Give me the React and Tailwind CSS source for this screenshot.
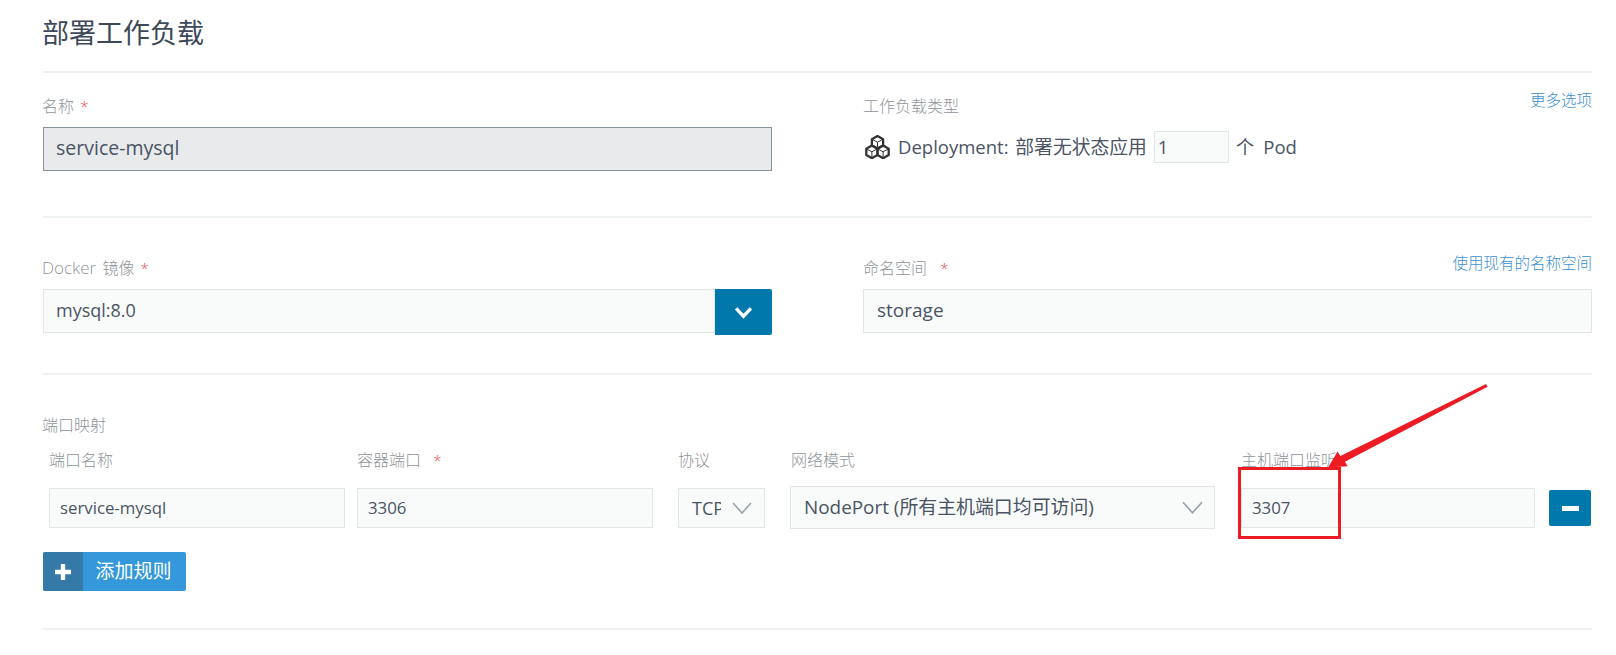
function Star({ className = "" }) {
  return <span className={`text-[#e8474a] text-[15px] leading-none ${className}`}>*</span>;
}

function Label({ children, className = "" }) {
  return <div className={`text-[16px] leading-5 text-[#8f959a] whitespace-nowrap ${className}`}>{children}</div>;
}

function Box({ children, className = "" }) {
  return (
    <div className={`flex items-center border border-[#e0e5e6] bg-[#f9fbfa] text-[#4a5464] whitespace-nowrap ${className}`}>
      {children}
    </div>
  );
}

function Chevron({ className = "" }) {
  return (
    <svg viewBox="0 0 20 12" className={`fill-none stroke-[#9aa3a8] ${className}`} strokeWidth="1.6">
      <path d="M1 1l9 10 9-10" />
    </svg>
  );
}

function CubesIcon() {
  const cube = (x, y) => (
    <g transform={`translate(${x} ${y})`}>
      <path d="M0-6.2L5.6-3V3.2L0 6.4-5.6 3.2V-3Z" />
      <path d="M-5.6-3L0 0 5.6-3M0 0V6.4" strokeWidth="1" />
    </g>
  );
  return (
    <svg viewBox="0 0 25 24" className="w-[25px] h-6 shrink-0 fill-none stroke-[#333333]" strokeWidth="2.3" strokeLinejoin="round">
      {cube(12.5, 7.2)}
      {cube(6.9, 16.8)}
      {cube(18.1, 16.8)}
    </svg>
  );
}

export default function App() {
  return (
    <div className="relative h-[655px] w-[1616px] overflow-hidden bg-white font-['Open_Sans','Noto_Sans_CJK_SC',sans-serif] font-light text-[#4a5464]">
      <div className="pl-[43px] pr-6">
        <div className="h-[73px] border-b-2 border-[#edf1f0] pt-[13px]">
          <h1 className="-ml-px text-[27px] leading-10 font-normal text-[#3d4859]">部署工作负载</h1>
        </div>

        <div className="grid h-[145px] grid-cols-[729px_729px] gap-x-[91px] border-b-2 border-[#edf1f0] pt-[23px]">
          <div>
            <Label className="-ml-px">名称 <Star className="ml-[2px]" /></Label>
            <div className="mt-[11px] flex h-[44px] items-center border border-[#8a939b] bg-[#e9eaec] pb-[3px] pl-[12px] text-[19.5px] font-normal text-[#4a5464]">
              service-mysql
            </div>
          </div>
          <div className="relative">
            <Label>工作负载类型</Label>
            <a className="absolute right-0 top-[-6px] text-[15.5px] leading-5 text-[#3b8fd0]">更多选项</a>
            <div className="mt-[15px] flex h-[32px] items-center text-[18.5px] font-normal">
              <span className="ml-[2px] mr-2"><CubesIcon /></span>
              <span className="whitespace-nowrap">Deployment: <span className="ml-[2px] text-[18.8px]">部署无状态应用</span></span>
              <Box className="ml-[7px] h-[32px] w-[75px] pl-[3px]">1</Box>
              <span className="ml-[7px] whitespace-nowrap">个<span className="ml-[9px]">Pod</span></span>
            </div>
          </div>
        </div>

        <div className="grid h-[157px] grid-cols-[729px_729px] gap-x-[91px] border-b-2 border-[#edf1f0] pt-[40px]">
          <div>
            <Label className="-ml-px"><span className="text-[17px]">Docker</span> <span className="ml-[2px]">镜像</span> <Star className="ml-[2px]" /></Label>
            <div className="mt-[11px] flex h-[46px] items-start">
              <Box className="h-[44px] flex-1 pb-[2px] pl-[12px] text-[18px] font-normal">mysql:8.0</Box>
              <button className="flex h-[46px] w-[57px] items-center justify-center rounded-r-[2px] bg-[#0078ab]">
                <svg viewBox="0 0 20 14" className="h-[13px] w-[19px] fill-none stroke-white" strokeWidth="3.6">
                  <path d="M2 2.5l8 8.5 8-8.5" />
                </svg>
              </button>
            </div>
          </div>
          <div className="relative">
            <Label>命名空间 <Star className="ml-[9px]" /></Label>
            <a className="absolute right-0 top-[-5px] text-[15.5px] leading-5 text-[#3b8fd0]">使用现有的名称空间</a>
            <Box className="mt-[11px] h-[44px] pb-[2px] pl-[13px] text-[19px] font-normal">storage</Box>
          </div>
        </div>

        <div className="h-[255px] border-b-2 border-[#edf1f0] pt-[40px]">
          <Label className="-ml-px">端口映射</Label>
          <div className="mt-[15px] flex items-start">
            <div className="ml-[6px] w-[296px]">
              <Label>端口名称</Label>
              <Box className="mt-[18px] h-[40px] pl-[10px] text-[16.8px] font-normal">service-mysql</Box>
            </div>
            <div className="ml-3 w-[296px]">
              <Label>容器端口 <Star className="ml-[8px]" /></Label>
              <Box className="mt-[18px] h-[40px] pl-[10px] text-[16.8px] font-normal">3306</Box>
            </div>
            <div className="ml-[25px] w-[87px]">
              <Label>协议</Label>
              <Box className="mt-[18px] h-[40px] justify-between pl-[13px] pr-[12px] text-[18px] font-normal">
                <span className="w-[29px] overflow-hidden">TCP</span>
                <Chevron className="h-[12px] w-5" />
              </Box>
            </div>
            <div className="ml-[25px] w-[425px]">
              <Label className="pl-px">网络模式</Label>
              <Box className="mt-4 h-[43px] justify-between pl-[13px] pr-[11px] text-[18.9px] font-normal">
                <span>NodePort (所有主机端口均可访问)</span>
                <Chevron className="h-[13px] w-[21px]" />
              </Box>
            </div>
            <div className="ml-[26px] w-[294px]">
              <Label>主机端口监听 <Star /></Label>
              <Box className="mt-[18px] h-[40px] pl-[10px] text-[16.8px] font-normal">3307</Box>
            </div>
            <button className="ml-[14px] mt-10 flex h-[36px] w-[42px] items-center justify-center rounded-[2px] bg-[#0078ab]">
              <span className="h-[5px] w-[17px] bg-white" />
            </button>
          </div>
          <button className="mt-[23px] flex h-[39px] w-[143px] overflow-hidden rounded-[2px] bg-[#3498db] text-white">
            <span className="flex h-full w-10 items-center justify-center bg-[#3579a9]">
              <svg viewBox="0 0 16 16" className="h-[16px] w-[16px] fill-white">
                <path d="M5.8 0h4.4v5.8H16v4.4h-5.8V16H5.8v-5.8H0V5.8h5.8z" />
              </svg>
            </span>
            <span className="flex h-full flex-1 items-center justify-center pr-[2px] text-[19px] font-normal">添加规则</span>
          </button>
        </div>
      </div>

      <div className="absolute left-[1238px] top-[467px] h-[72px] w-[103px] border-[3px] border-[#ed1c24]" />
      <svg className="absolute left-0 top-0 h-[655px] w-[1616px]" viewBox="0 0 1616 655" fill="#ed1c24">
        <path d="M1486 384l1.6 2.8-142.6 75 2.6 4.4-19.6 1.3 9.6-16 2.8 4.6z" />
      </svg>
    </div>
  );
}
